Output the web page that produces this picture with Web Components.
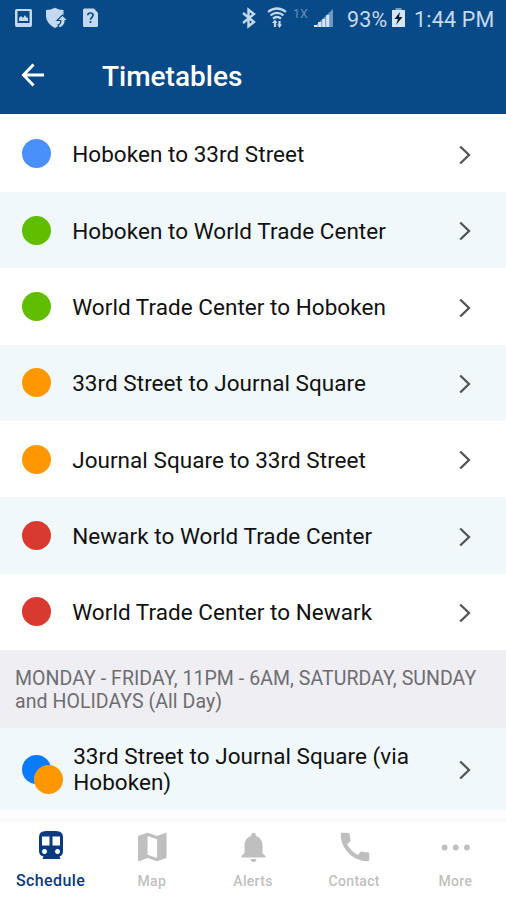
<!DOCTYPE html>
<html lang="en">
<head>
<meta charset="utf-8">
<meta name="viewport" content="width=device-width, initial-scale=1">
<title>Timetables</title>
<style>
    body {
        margin: 0;
        font-family: Roboto, "Liberation Sans", sans-serif;
        background: white;
    }
</style>
</head>
<body>
<timetable-app>
    <status-bar slot="header"></status-bar>
    <app-header slot="header">Timetables</app-header>

    <route-row colors="#4a90fa">Hoboken to 33rd Street</route-row>
    <route-row colors="#61bd00" shaded>Hoboken to World Trade Center</route-row>
    <route-row colors="#61bd00">World Trade Center to Hoboken</route-row>
    <route-row colors="#ff9800" shaded>33rd Street to Journal Square</route-row>
    <route-row colors="#ff9800">Journal Square to 33rd Street</route-row>
    <route-row colors="#d93a2f" shaded>Newark to World Trade Center</route-row>
    <route-row colors="#d93a2f">World Trade Center to Newark</route-row>
    <section-title>MONDAY - FRIDAY, 11PM - 6AM, SATURDAY, SUNDAY<br>and HOLIDAYS (All Day)</section-title>
    <route-row colors="#0a7aff #ff9800" shaded tall>33rd Street to Journal Square (via<br>Hoboken)</route-row>

    <nav-tab slot="tabs" icon="train" active>Schedule</nav-tab>
    <nav-tab slot="tabs" icon="map">Map</nav-tab>
    <nav-tab slot="tabs" icon="bell">Alerts</nav-tab>
    <nav-tab slot="tabs" icon="phone">Contact</nav-tab>
    <nav-tab slot="tabs" icon="more">More</nav-tab>
</timetable-app>

<script>
// <timetable-app> page frame: header, list, bottom tabs
class TimetableApp extends HTMLElement {
    constructor() {
        super();
        this.attachShadow({ mode: "open" });
        this.shadowRoot.innerHTML = `
        <style>
            :host {
                display: flex;
                flex-direction: column;
                height: 900px;
                overflow: hidden;
            }

            header {
                height: 114px;
                flex: none;
                background: #084a87;
            }

            main {
                flex: 1;
                min-height: 0;
                padding-top: 1.6px;
                overflow: hidden;
            }

            nav {
                display: grid;
                grid-template-columns: repeat(5, 1fr);
                height: 78px;
                flex: none;
                border-top: 4px solid #f8f8f8;
            }
        </style>
        <header><slot name="header"></slot></header>
        <main><slot></slot></main>
        <nav><slot name="tabs"></slot></nav>
        `;
    }
}

// <status-bar> phone status icons, battery and clock
class StatusBar extends HTMLElement {
    constructor() {
        super();
        this.attachShadow({ mode: "open" });
        this.shadowRoot.innerHTML = `
        <style>
            :host {
                display: flex;
                align-items: flex-start;
                height: 38px;
                box-sizing: border-box;
                padding: 7px 11px 0 14px;
                color: #c5d9ee;
                font-size: 21.5px;
                line-height: 25px;
                white-space: nowrap;
            }

            svg {
                display: block;
                flex: none;
                overflow: visible;
            }

            .shield { margin-left: 13px; }
            .file { margin-left: 16px; }
            .bluetooth { margin-left: auto; }
            .wifi { margin-left: 11px; }

            .net {
                margin-left: 6px;
                width: 15px;
                font-size: 12.5px;
                line-height: 13px;
                color: #6690bb;
            }

            .signal { margin-left: 6px; }
            .percent { margin-left: 14px; width: 41px; letter-spacing: 0.2px; }
            .battery { margin-left: 4px; }
            .clock { margin-left: 9px; width: 81px; letter-spacing: 0.2px; }
        </style>
        <svg width="19" height="22" viewBox="0 0 19 22">
            <path fill="currentColor" fill-rule="evenodd" d="M2.500 2h14q1.500 0 1.500 2v14q0 2-1.500 2h-14Q1 20 1 18V4q0-2 1.500-2zM3.500 4v12h12V4z"/>
            <path fill="currentColor" d="M5 14v-3l2-2 2 2 2-3 1 2 2 1v3z"/>
        </svg>
        <svg class="shield" width="21" height="22" viewBox="0 0 21 22">
            <path fill="currentColor" d="M9 0.800Q5 3 0 3v6c0 5 4 9.500 9 12 5-2.500 8-6 8.500-11V3Q13 3 9 .8z"/>
            <path fill="#c5d9ee" stroke="#084a87" stroke-width="1.200" d="M16.500 8l5.500 5.500h-2.800c0 4-2 6.500-6.200 7.500l-1-3c2-.5 2.800-2 2.800-4.500H11z"/>
        </svg>
        <svg class="file" width="16" height="22" viewBox="0 0 16 22">
            <path fill="currentColor" d="M1.500 1.500H11l4 4.500v12.500q0 1.500-1.500 1.500h-12Q0 20 0 18.500V3q0-1.500 1.500-1.500z"/>
            <path fill="none" stroke="#0b4a88" stroke-width="1.700" d="M4.800 8.300q0-2.300 2.600-2.300t2.600 2.300c0 2-2.500 2-2.500 4.500M7.500 14v2"/>
        </svg>

        <svg class="bluetooth" width="14" height="22" viewBox="0 0 14 22">
            <path fill="none" stroke="currentColor" stroke-width="2.400" d="M1 6l11 9-5.500 4.300V2.700L12 7 1 16"/>
        </svg>
        <svg class="wifi" width="20" height="22" viewBox="0 0 20 22">
            <g fill="none" stroke="currentColor" stroke-width="2.200">
                <path d="M1 5q9-7 18 0M3.500 8.300q6.500-5 13 0M6 11.500q4-3 8 0"/>
                <path d="M8 20v-5M12.500 14v5"/>
            </g>
            <path fill="currentColor" d="M5 16l3-3.500 2.300 3.500zM10.200 17.500h4.800l-2.500 3.500z"/>
        </svg>
        <span class="net">1X</span>
        <svg class="signal" width="19" height="22" viewBox="0 0 19 22">
            <path fill="#6f96c0" d="M0 20L19 2v18z"/>
            <path fill="#d7e5f5" d="M0 18h3.500v2H0zM4.200 15h3v5h-3zM8.200 12h3v8h-3zM12.200 8h3v12h-3z"/>
        </svg>
        <span class="percent">93%</span>
        <svg class="battery" width="13" height="22" viewBox="0 0 13 22">
            <path fill="#7c9fc4" d="M3.500 1h6v3h-6z"/>
            <path fill="#d7e5f5" d="M0 3h13v17H0z"/>
            <path fill="#061c34" d="M8 5L2.500 12H6l-2 6L10.500 10H7z"/>
        </svg>
        <span class="clock">1:44 PM</span>
        `;
    }
}

// <app-header> back arrow and page title
class AppHeader extends HTMLElement {
    constructor() {
        super();
        this.attachShadow({ mode: "open" });
        this.shadowRoot.innerHTML = `
        <style>
            :host {
                display: flex;
                align-items: center;
                height: 74px;
                padding-left: 20px;
                color: white;
            }

            h1 {
                margin: 0 0 0 58px;
                font-size: 28px;
                font-weight: 500;
                line-height: 34px;
                padding-top: 3px;
            }
        </style>
        <svg width="24" height="24" viewBox="0 0 24 24">
            <path fill="none" stroke="currentColor" stroke-width="2.900" d="M24.500 12H3.500M13.500 1.500L3.500 12l10 10.500"/>
        </svg>
        <h1><slot></slot></h1>
        `;
    }
}

// <route-row> one line of the list, with a dot for each line colour
class RouteRow extends HTMLElement {
    constructor() {
        super();
        this.attachShadow({ mode: "open" });
        this.render();
    }

    render() {
        const dots = this.getAttribute("colors").split(" ")
            .map(color => `<i style="background: ${color}"></i>`)
            .join("");

        this.shadowRoot.innerHTML = `
        <style>
            :host {
                display: flex;
                align-items: center;
                height: 76.33px;
                box-sizing: border-box;
                padding: 0 35px 0 21.5px;
                background: white;
                color: #111;
            }

            :host([shaded]) { background: #f0f8fb; }
            :host([tall]) { height: 82px; }

            .dots {
                display: grid;
                width: 50.7px;
                flex: none;
            }

            i {
                grid-area: 1 / 1;
                width: 29px;
                height: 29px;
                border-radius: 50%;
            }

            /* second dot sits down and to the right of the first */
            i + i { margin: 10px 0 0 12px; }

            p {
                flex: 1;
                margin: 1px 0 0;
                font-size: 22.5px;
                line-height: 26px;
                letter-spacing: 0.04px;
                white-space: nowrap;
            }

            :host([tall]) .dots { width: 51.7px; margin-top: 10px; }
            :host([tall]) p { margin-top: 0; }

            svg { margin-top: 2.5px; }
        </style>
        <div class="dots">${dots}</div>
        <p><slot></slot></p>
        <svg width="12" height="20" viewBox="0 0 12 20">
            <path fill="none" stroke="#555" stroke-width="2.300" d="M1.200 1.500L10 10l-8.800 8.500"/>
        </svg>
        `;
    }
}

// <section-title> grey band between groups of routes
class SectionTitle extends HTMLElement {
    constructor() {
        super();
        this.attachShadow({ mode: "open" });
        this.shadowRoot.innerHTML = `
        <style>
            :host {
                display: block;
                height: 78.3px;
                box-sizing: border-box;
                padding: 17px 0 0 15px;
                background: #efeef3;
                color: #6d6d72;
                font-size: 19.5px;
                line-height: 23px;
                letter-spacing: 0.06px;
                white-space: nowrap;
            }
        </style>
        <slot></slot>
        `;
    }
}

const icons = {
    train: `<path fill-rule="evenodd" d="M17 5h10q7 0 7 6v14q0 4.500-3.500 5.500l1 2.500h-18l1-2.500Q10 29.500 10 25V11q0-6 7-6zM13 10.500v9h7.500v-9zM23.500 10.500v9H31v-9zM15.500 23a2.500 2.500 0 1 0 .01 0zM28.500 23a2.500 2.500 0 1 0 .01 0z"/>`,
    map: `<path transform="translate(3.300 1) scale(1.583)" d="M20.500 3l-.16.03L15 5.100 9 3 3.360 4.900c-.21.070-.36.250-.36.480V20.500c0 .28.220.5.500.5l.16-.03L9 18.900l6 2.100 5.640-1.900c.21-.07.36-.25.36-.48V3.500c0-.28-.22-.5-.5-.5zM15 19l-6-2.110V5l6 2.110V19z"/>`,
    bell: `<path transform="translate(4.500 2) scale(1.500)" d="M12 22c1.100 0 2-.9 2-2h-4c0 1.100.89 2 2 2zm6-6v-5c0-3.070-1.640-5.640-4.500-6.320V4c0-.83-.67-1.500-1.500-1.500s-1.500.67-1.500 1.500v.68C7.630 5.360 6 7.920 6 11v5l-2 2v1h16v-1l-2-2z"/>`,
    phone: `<path transform="translate(4 1) scale(1.583)" d="M20.010 15.380c-1.230 0-2.420-.2-3.530-.56-.35-.12-.74-.03-1.010.24l-1.570 1.970c-2.830-1.350-5.480-3.900-6.890-6.830l1.950-1.660c.27-.28.35-.67.24-1.020-.37-1.110-.56-2.300-.56-3.530 0-.54-.45-.99-.99-.99H4.190C3.650 3 3 3.240 3 3.990 3 13.280 10.730 21 20.010 21c.71 0 .99-.63.99-1.180v-3.450c0-.54-.45-.99-.99-.99z"/>`,
    more: `<circle cx="11.600" cy="20.500" r="2.900"/><circle cx="22.800" cy="20.500" r="2.900"/><circle cx="34" cy="20.500" r="2.900"/>`
};

// <nav-tab> icon with label in the bottom bar
class NavTab extends HTMLElement {
    constructor() {
        super();
        this.attachShadow({ mode: "open" });
        this.shadowRoot.innerHTML = `
        <style>
            :host {
                display: flex;
                flex-direction: column;
                align-items: center;
                padding-top: 5px;
                color: #bfbfbf;
                font-size: 14px;
                font-weight: 500;
                line-height: 18px;
                letter-spacing: 0.3px;
            }

            :host([active]) {
                padding-top: 4px;
                color: #0b3a80;
                font-size: 16px;
                letter-spacing: 0.4px;
            }

            svg {
                display: block;
                fill: currentColor;
                margin-bottom: 5px;
            }

            :host([active]) svg { margin-bottom: 6px; }
        </style>
        <svg width="44" height="40" viewBox="0 0 44 40">${icons[this.getAttribute("icon")]}</svg>
        <span><slot></slot></span>
        `;
    }
}

customElements.define("timetable-app", TimetableApp);
customElements.define("status-bar", StatusBar);
customElements.define("app-header", AppHeader);
customElements.define("route-row", RouteRow);
customElements.define("section-title", SectionTitle);
customElements.define("nav-tab", NavTab);
</script>
</body>
</html>
